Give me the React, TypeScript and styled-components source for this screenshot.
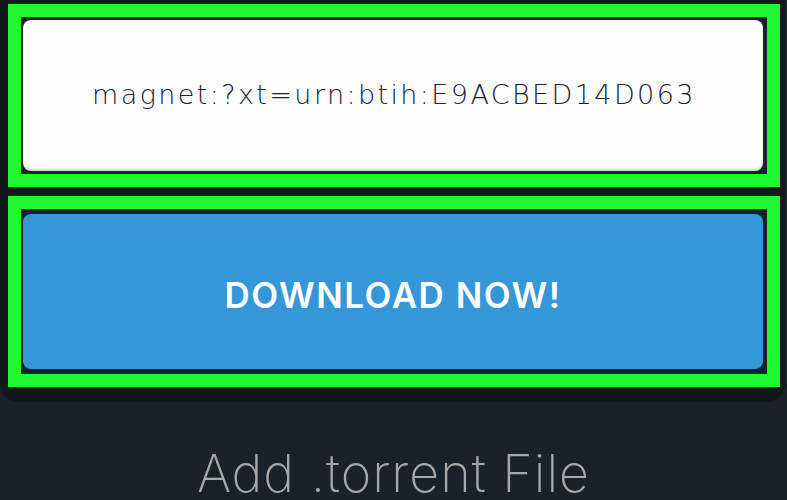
import React from 'react';
import styled, { createGlobalStyle } from 'styled-components';

const GlobalStyle = createGlobalStyle`
  html, body {
    margin: 0;
    padding: 0;
    background: #1b2227;
    overflow: hidden;
  }
`;

const Page = styled.div`
  width: 787px;
  height: 500px;
  display: flex;
  flex-direction: column;
  font-family: Inter, 'Liberation Sans', sans-serif;
`;

const Panel = styled.div`
  width: 785px;
  box-sizing: border-box;
  background: #13181b;
  border-radius: 0 0 18px 18px;
  padding: 4px 5px 15px 8px;
  display: flex;
  flex-direction: column;
  gap: 9px;
`;

const Frame = styled.div<{ $pad: number }>`
  border: 13px solid #21f932;
  background: #1a2024;
  padding: ${({ $pad }) => `${$pad}px 4px ${$pad}px 2px`};
`;

const MagnetField = styled.div`
  height: 151px;
  box-sizing: border-box;
  background: #fdfdfd;
  border-radius: 8px;
  box-shadow: inset 0 -2px 2px rgba(0, 0, 0, 0.15);
  padding: 0 68px 0 69px;
  display: flex;
  align-items: center;
`;

const MagnetText = styled.div`
  white-space: nowrap;
  overflow: hidden;
  font-family: 'DejaVu Sans', Inter, sans-serif;
  font-size: 27px;
  font-weight: 200;
  letter-spacing: 2.4px;
  color: #1b2434;
  padding-bottom: 2px;
`;

const DownloadButton = styled.div`
  height: 155px;
  background: #3596d8;
  border-radius: 8px;
  display: flex;
  align-items: center;
  justify-content: center;
  color: #ffffff;
  font-size: 35px;
  font-weight: 600;
  letter-spacing: 1.5px;
  padding-top: 6px;
  box-sizing: border-box;
`;

const Caption = styled.div`
  margin-top: 52px;
  text-align: center;
  font-size: 52px;
  font-weight: 200;
  line-height: 40px;
  letter-spacing: 1px;
  color: #a8a8a8;
`;

export default function App() {
  return (
    <Page>
      <GlobalStyle />
      <Panel>
        <Frame $pad={3}>
          <MagnetField>
            <MagnetText>magnet:?xt=urn:btih:E9ACBED14D063</MagnetText>
          </MagnetField>
        </Frame>
        <Frame $pad={5}>
          <DownloadButton>DOWNLOAD NOW!</DownloadButton>
        </Frame>
      </Panel>
      <Caption>Add .torrent File</Caption>
    </Page>
  );
}
